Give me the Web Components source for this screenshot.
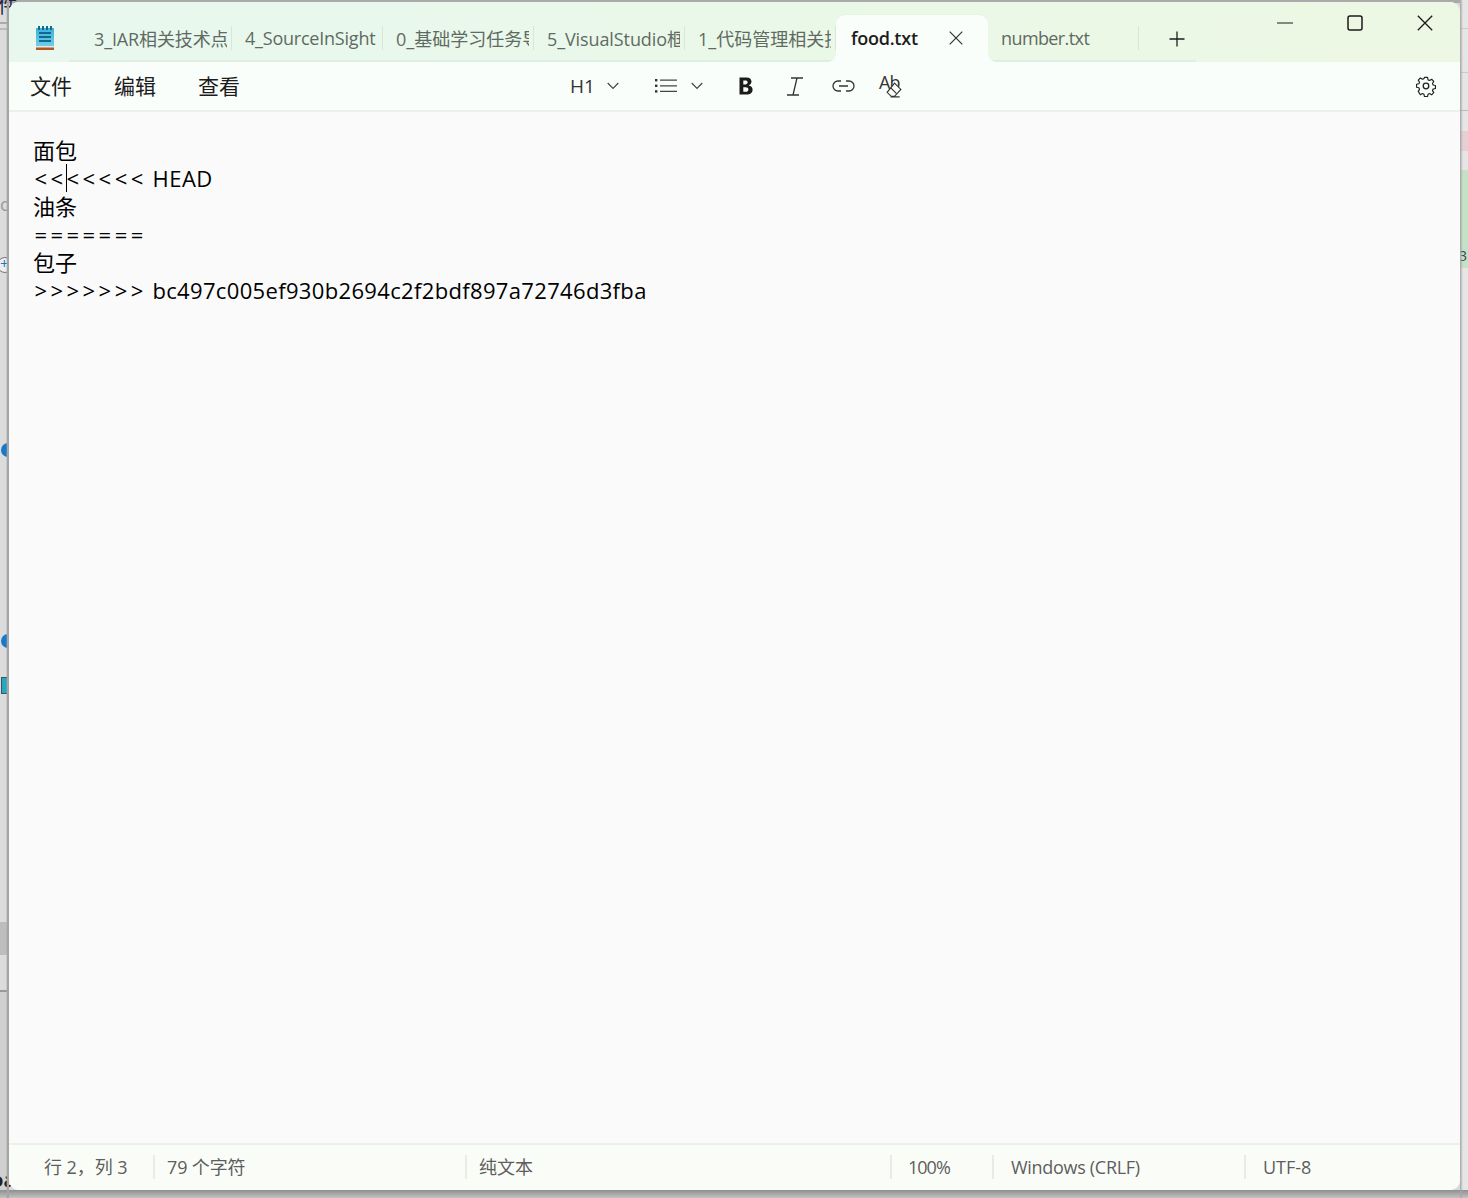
<!DOCTYPE html>
<html lang="zh"><head><meta charset="utf-8"><title>food.txt - Notepad</title>
<style>
html,body{margin:0;padding:0;width:1468px;height:1198px;overflow:hidden;background:#bdbdbd;font-family:"Open Sans","Noto Sans CJK SC",sans-serif}
</style></head><body>
<np-backdrop>
<np-window>
<np-titlebar>
<np-tab style="--ls:-.12px">3_IAR相关技术点</np-tab><np-tab style="--ls:-.22px">4_SourceInSight</np-tab><np-tab>0_基础学习任务导</np-tab><np-tab style="--ls:-.1px">5_VisualStudio框</np-tab><np-tab>1_代码管理相关技</np-tab><np-tab active style="--ls:-.25px">food.txt</np-tab><np-tab style="--ls:-.6px">number.txt</np-tab>
</np-titlebar>
<np-menubar></np-menubar>
<np-editor></np-editor>
<np-statusbar></np-statusbar>
</np-window>
</np-backdrop>
<script>
const FONT='"Open Sans","Noto Sans CJK SC",sans-serif';
function def(name,html){customElements.define(name,class extends HTMLElement{constructor(){super();const r=this.attachShadow({mode:'open'});r.innerHTML=html;}})}

def('np-backdrop',`<style>
:host{display:block;position:relative;width:1468px;height:1198px;box-sizing:border-box;padding:2px 8px 8px 9px;overflow:hidden;background:#d9d9d9}
.f{position:absolute;display:block}
.t{position:absolute;font:18px ${FONT};color:#222;white-space:nowrap;line-height:1}
</style>
<span class="f" style="left:0;top:0;width:9px;height:1198px;background:#dcdcdc"></span>
<span class="f" style="left:0;top:0;width:1468px;height:3px;background:#a9a9a9"></span>
<span class="f" style="left:0;top:22px;width:9px;height:2px;background:#aaa"></span>
<span class="f" style="left:0;top:28px;width:9px;height:2px;background:#bbb"></span>
<span class="f" style="left:0;top:922px;width:9px;height:33px;background:#bdbdbd"></span>
<span class="f" style="left:0;top:990px;width:9px;height:2px;background:#999"></span>
<span class="f" style="left:0;top:992px;width:9px;height:206px;background:#d0d0d0"></span>
<span class="f" style="left:1460px;top:0;width:8px;height:1198px;background:#e6e6e6"></span>
<span class="f" style="left:1460px;top:131px;width:8px;height:20px;background:#e8cfd3"></span>
<span class="f" style="left:1460px;top:170px;width:8px;height:98px;background:#c6e2c6"></span>
<span class="f" style="left:1460px;top:28px;width:8px;height:1px;background:#ccc"></span>
<span class="f" style="left:1460px;top:72px;width:8px;height:1px;background:#ccc"></span>
<span class="f" style="left:1460px;top:110px;width:8px;height:1px;background:#bbb"></span>
<span class="f" style="left:1px;top:443px;width:14px;height:14px;border-radius:50%;background:#1a78c8"></span>
<span class="f" style="left:1px;top:634px;width:14px;height:14px;border-radius:50%;background:#1a78c8"></span>
<span class="f" style="left:2px;top:678px;width:12px;height:15px;background:#2aa5bd;outline:1px solid #34566a"></span>
<span class="f" style="left:-3px;top:257px;width:14px;height:14px;border-radius:50%;border:1px solid #777;background:#eee"></span>
<span class="t" style="left:0;top:256px;font-size:15px;color:#1a78c8">+</span>
<span class="t" style="left:0;top:195px;color:#999">c</span>
<span class="t" style="left:-2px;top:-4px;font-size:20px;color:#224">件</span>
<span class="t" style="left:1459px;top:249px;font-size:14px;color:#345">3</span>
<span class="t" style="left:-9px;top:1170px;font-weight:700;font-size:20px">oa</span>
<span class="f" style="left:0;top:1190px;width:1468px;height:8px;background:linear-gradient(#8f8f8f,#c2c2c2)"></span>
<span class="f" style="left:0;top:0;width:9px;height:1198px;background:linear-gradient(90deg,transparent 6px,#a5a5a5 7.5px)"></span>
<span class="f" style="left:1460px;top:0;width:3px;height:1198px;background:linear-gradient(90deg,#a5a5a5,transparent)"></span>
<slot></slot>`);

def('np-window',`<style>
:host{display:flex;flex-direction:column;position:relative;width:1451px;height:1188px;border-radius:10px;overflow:hidden;background:#fafafa}
</style><slot></slot>`);

const logo=`<svg width="20" height="24" viewBox="0 0 20 24" aria-hidden="true">
<defs><linearGradient id="g" x1="0" x2="0" y1="0" y2="1"><stop offset="0" stop-color="#3fb1d8"/><stop offset="1" stop-color="#70cdea"/></linearGradient></defs>
<rect x="1" y="2" width="18" height="18" fill="url(#g)"/>
<g fill="#0f6b8c"><rect x="3" y="0" width="2" height="4"/><rect x="7" y="0" width="2" height="4"/><rect x="11" y="0" width="2" height="4"/><rect x="15" y="0" width="2" height="4"/>
<rect x="4" y="6" width="12" height="2"/><rect x="4" y="10" width="12" height="2"/><rect x="4" y="14" width="12" height="2"/></g>
<rect x="1" y="20" width="18" height="1.5" fill="#e6e6e6"/><rect x="1" y="21.5" width="18" height="2.5" fill="#b4561f"/></svg>`;

def('np-titlebar',`<style>
:host{display:flex;flex:0 0 60px;height:60px;background:linear-gradient(90deg,#e8f8ef,#ecf8e3);position:relative}
.logo{flex:0 0 60px;height:60px;display:flex;align-items:flex-start;justify-content:center;padding:24px 0 0 12px;box-sizing:border-box;margin-right:12px}
.tabs{display:flex;align-items:flex-end;height:60px;position:relative;box-sizing:border-box}
.tabs::after{content:"";position:absolute;left:-12px;right:-57px;bottom:0;height:2px;background:#dcefe0;z-index:0}
.add{flex:0 0 58px;height:60px;display:flex;align-items:center;justify-content:center;padding:14px 0 0 18px;box-sizing:border-box}
.sp{flex:1}
.ctl{display:flex;align-self:flex-start}
.ctl span{width:70px;height:42px;display:flex;align-items:center;justify-content:center}
svg{display:block}
</style>
<div class="logo">${logo}</div>
<div class="tabs"><slot></slot></div>
<div class="add"><svg width="16" height="16" viewBox="0 0 16 16"><path d="M8 .5v15M.5 8h15" stroke="#1c1c1c" stroke-width="1.3" fill="none"/></svg></div>
<div class="sp"></div>
<div class="ctl">
<span><svg width="16" height="16" viewBox="0 0 16 16"><path d="M0 8h16" stroke="#1a1a1a" stroke-width="1.2"/></svg></span>
<span><svg width="16" height="16" viewBox="0 0 16 16"><rect x="1" y="1" width="14" height="14" rx="2" stroke="#1a1a1a" stroke-width="1.5" fill="none"/></svg></span>
<span><svg width="16" height="16" viewBox="0 0 16 16"><path d="M.8.8l14.4 14.4M15.2.8L.8 15.2" stroke="#1a1a1a" stroke-width="1.3" fill="none"/></svg></span>
</div>`);

def('np-tab',`<style>
:host{display:flex;flex:0 0 151px;width:151px;height:47px;box-sizing:border-box;position:relative;z-index:1;color:#5f6b62;font:18px ${FONT};letter-spacing:var(--ls,0);align-items:center;padding:0 5px 2px 13px}
.lbl{flex:1;overflow:hidden;white-space:nowrap;min-width:0}
:host::after{content:"";position:absolute;right:0;top:11px;height:24px;width:1px;background:#d8e6da}
:host([active]){background:#fafefa;color:#1c1c1c;font-weight:600;border-radius:9px 9px 0 0;box-shadow:0 -1px 0 #e6f2e6;z-index:2;flex-basis:152px;width:152px;padding-right:25px;padding-left:15px}
:host([active])::after{left:auto;right:-8px;top:auto;bottom:0;width:8px;height:8px;background:radial-gradient(circle at 100% 0,transparent 7.500px,#fafefa 8px)}
:host([active])::before{content:"";position:absolute;left:-8px;bottom:0;width:8px;height:8px;background:radial-gradient(circle at 0 0,transparent 7.500px,#fafefa 8px)}
.x{display:none;flex:0 0 14px}
:host([active]) .x{display:block}
</style><span class="lbl"><slot></slot></span>
<svg class="x" width="14" height="14" viewBox="0 0 14 14"><path d="M.7.7l12.6 12.6M13.3.7L.7 13.3" stroke="#333" stroke-width="1.2" fill="none"/></svg>`);

def('np-menubar',`<style>
:host{display:grid;grid-template-columns:1fr auto 1fr;align-items:center;flex:0 0 50px;height:50px;box-sizing:border-box;background:#fafefa;border-bottom:2px solid #eef0ee;color:#1c1c1c;font:21px ${FONT}}
.m{display:flex;padding-left:21px;gap:42px;padding-bottom:2px}
.tb{display:flex;align-items:center;font-size:19px;color:#333;padding-left:2px;height:48px}
.tb svg{display:block}
.h1{width:24px;font-size:19px;white-space:nowrap}
.r{display:flex;justify-content:flex-end;padding-right:23px}
</style>
<div class="m"><span>文件</span><span>编辑</span><span>查看</span></div>
<div class="tb">
<span class="h1">H1</span>
<svg style="margin-left:13px" width="12" height="8" viewBox="0 0 12 8"><path d="M.7 1l5.3 5.5L11.3 1" stroke="#444" stroke-width="1.2" fill="none"/></svg>
<svg style="margin-left:36px" width="22" height="14" viewBox="0 0 22 14"><g fill="#333"><rect x="0" y="0" width="2.4" height="2.4"/><rect x="0" y="5.6" width="2.4" height="2.4"/><rect x="0" y="11.2" width="2.4" height="2.4"/></g><path d="M5 1.2h17M5 6.8h17M5 12.4h17" stroke="#444" stroke-width="1.2"/></svg>
<svg style="margin-left:14px" width="12" height="8" viewBox="0 0 12 8"><path d="M.7 1l5.3 5.5L11.3 1" stroke="#444" stroke-width="1.2" fill="none"/></svg>
<svg style="margin-left:36px" width="14" height="18" viewBox="0 0 14 18"><path d="M.5.5h6.700c3.400 0 5.300 1.600 5.300 4.100 0 1.900-1.200 3.300-2.900 3.800v.1c2.400.3 4 1.900 4 4.200 0 3-2.300 4.800-5.900 4.800H.5zM4.300 3.400v4h1.900c1.500 0 2.400-.8 2.400-2.100S7.700 3.400 6.300 3.400zM4.300 10.200v4.500h2.300c1.800 0 2.800-.8 2.800-2.300s-1-2.200-2.900-2.200z" fill="#1c1c1c" fill-rule="evenodd"/></svg>
<svg style="margin-left:33px" width="18" height="19" viewBox="0 0 18 19"><path d="M5 1h12M1 18h12M11 1L7 18" stroke="#333" stroke-width="1.3" fill="none"/></svg>
<svg style="margin-left:28px" width="23" height="14" viewBox="0 0 23 14"><path d="M9 2H6a5 5 0 000 10h3M14 2h3a5 5 0 010 10h-3M7 7h9" stroke="#333" stroke-width="1.3" fill="none"/></svg>
<span style="margin-left:24px;position:relative;display:block;width:22px;height:22px"><span style="position:absolute;left:0;top:-4px;font-size:18px;line-height:22px;color:#333;letter-spacing:-1px">Ab</span>
<svg style="position:absolute;left:7px;top:7px" width="16" height="16" viewBox="0 0 14 14"><path d="M7.500 1L13 6.500 7.500 12.500H4.500L1 9zM4 5l5 5M4 13h8" stroke="#333" stroke-width="1" fill="#fafefa"/></svg></span>
</div>
<div class="r"><svg width="22" height="22" viewBox="0 0 22 22"><path d="M9.300 1.500h3.400l.6 2.700 1.600.7 2.400-1.400 2.300 2.400-1.400 2.300.7 1.700 2.600.6v3.300l-2.600.6-.7 1.700 1.400 2.300-2.300 2.400-2.400-1.400-1.600.7-.6 2.700H9.300l-.6-2.700-1.600-.7-2.400 1.400L2.400 17l1.400-2.300-.7-1.700-2.600-.6V9.100l2.600-.6.7-1.700L2.400 4.500l2.300-2.400 2.400 1.400 1.600-.7z" transform="translate(1.100 1.100) scale(.9)" stroke="#222" stroke-width="1.300" fill="none" stroke-linejoin="round"/><circle cx="11" cy="11" r="2.800" stroke="#222" stroke-width="1.300" fill="none"/></svg></div>`);

def('np-editor',`<style>
:host{display:block;flex:1;min-height:0;background:#fafafa;box-sizing:border-box;padding:24px 24px 0;font:22px/28px ${FONT};color:#000}
div{height:28px;white-space:pre}
.c{display:inline-block;width:0;height:28px;border-left:1px solid #000;vertical-align:top;margin-left:-1px}
.a{letter-spacing:3.45px;padding-left:1.500px}
.h{letter-spacing:.34px}
.w{letter-spacing:.5px}
</style>
<div>面包</div><div><span class="a">&lt;&lt;<span class="c"></span>&lt;&lt;&lt;&lt;&lt;</span> <span class="w">HEAD</span></div><div>油条</div><div><span class="a">=======</span></div><div>包子</div><div><span class="a">&gt;&gt;&gt;&gt;&gt;&gt;&gt;</span> <span class="h">bc497c005ef930b2694c2f2bdf897a72746d3fba</span></div>`);

def('np-statusbar',`<style>
:host{display:flex;flex:0 0 47px;height:47px;box-sizing:border-box;background:#fafdf7;border-top:2px solid #eeeeea;color:#5e5e5e;font:18px ${FONT};align-items:center;padding-bottom:2px}
span{display:block;height:24px;line-height:24px;box-sizing:border-box;padding-left:12px;border-left:2px solid #e9ebe6;white-space:nowrap;flex:none}
span:first-of-type{border-left:0;padding-left:35px}
</style>
<span style="width:144px;letter-spacing:-.05px">行 2，列 3</span><span style="width:312px;letter-spacing:-.15px">79 个字符</span><span style="width:425px">纯文本</span><span style="width:102px;padding-left:16px;letter-spacing:-1px">100%</span><span style="width:252px;padding-left:17px;letter-spacing:-.3px">Windows (CRLF)</span><span style="padding-left:17px">UTF-8</span>`);
</script>
</body></html>
